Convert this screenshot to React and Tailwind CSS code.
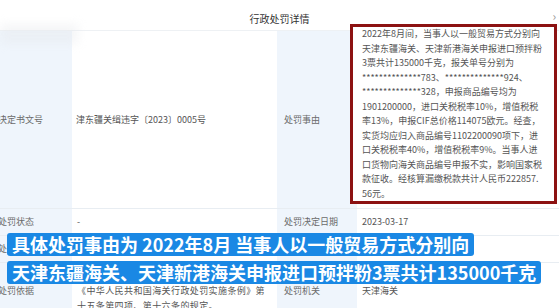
import React from 'react';

const reasonLines = [
  '2022年8月间，当事人以一般贸易方式分别向',
  '天津东疆海关、天津新港海关申报进口预拌粉',
  '3票共计135000千克，报关单号分别为',
  '**************783、**************924、',
  '**************328，申报商品编号均为',
  '1901200000，进口关税税率10%，增值税税',
  '率13%，申报CIF总价格114075欧元。经查，',
  '实货均应归入商品编号1102200090项下，进',
  '口关税税率40%，增值税税率9%。当事人进',
  '口货物向海关商品编号申报不实，影响国家税',
  '款征收。经核算漏缴税款共计人民币222857.',
  '56元。',
];

const basisLines = [
  '《中华人民共和国海关行政处罚实施条例》第',
  '十五条第四项、第十六条的规定。',
];

const labelCls = 'bg-[#eff5fc] pl-[7px] flex items-center text-[#6b6b6b] border-b border-[#e8edf2]';
const valueCls = 'flex items-center text-[#555] border-b border-[#e8edf2]';

export default function App() {
  return (
    <div className="relative w-[559px] h-[308px] overflow-hidden bg-white font-['Noto_Sans_CJK_SC',sans-serif] text-[9px]">
      {/* header */}
      <div className="relative h-[30px] pt-[6px] flex items-center justify-center text-[10px] text-[#333]">
        行政处罚详情
        <span className="absolute right-[3px] top-[10px] text-[#999] text-[12px] leading-none">›</span>
      </div>

      {/* blurred watermark */}
      <div className="absolute left-0 top-[24px] w-[78px] h-[20px] bg-[#e6e8ec] opacity-40 blur-[5px]" />

      {/* table */}
      <div className="grid grid-cols-[81px_205px_80px_1fr] -ml-[9px] border-t border-[#eef1f4]">
        <div className={`${labelCls} h-[178px]`}>决定书文号</div>
        <div className={`${valueCls} pl-[4px]`}>津东疆关缉违字〔2023〕0005号</div>
        <div className={labelCls}>处罚事由</div>
        <div className={`${valueCls} relative`}>
          <div className="absolute left-[-7px] top-[-7px] w-[207px] h-[180px] border-[3px] border-[#8c1212] bg-white pl-[9px] leading-[14.5px] text-[#555]">
            {reasonLines.map((line, i) => (
              <div key={i} className="whitespace-nowrap">{line}</div>
            ))}
          </div>
        </div>

        <div className={`${labelCls} h-[27px]`}>处罚状态</div>
        <div className={`${valueCls} pl-[5px]`}>-</div>
        <div className={labelCls}>处罚决定日期</div>
        <div className={`${valueCls} pl-[5px]`}>2023-03-17</div>

        <div className={`${labelCls} h-[27px]`}>处</div>
        <div className={valueCls}></div>
        <div className={labelCls}></div>
        <div className={valueCls}></div>

        <div className={labelCls}>处罚依据</div>
        <div className={`${valueCls} flex-col items-start justify-start pl-[5px] pt-[19.5px] pb-[5px] leading-[15.5px] tracking-[0.4px]`}>
          {basisLines.map((line, i) => (
            <div key={i} className="whitespace-nowrap">{line}</div>
          ))}
        </div>
        <div className={labelCls}>处罚机关</div>
        <div className={`${valueCls} pl-[5px]`}>天津海关</div>
      </div>

      {/* subtitles */}
      <div className="absolute left-[7px] top-[233px] h-[23px] px-[5px] rounded-[3px] bg-[#1a88e4] text-white font-bold text-[18px] leading-[23px] whitespace-nowrap">
        具体处罚事由为 2022年8月 当事人以一般贸易方式分别向
      </div>
      <div className="absolute left-[7px] top-[261px] h-[23px] px-[5px] rounded-[3px] bg-[#1a88e4] text-white font-bold text-[18px] leading-[23px] whitespace-nowrap">
        天津东疆海关、天津新港海关申报进口预拌粉3票共计135000千克
      </div>
    </div>
  );
}
